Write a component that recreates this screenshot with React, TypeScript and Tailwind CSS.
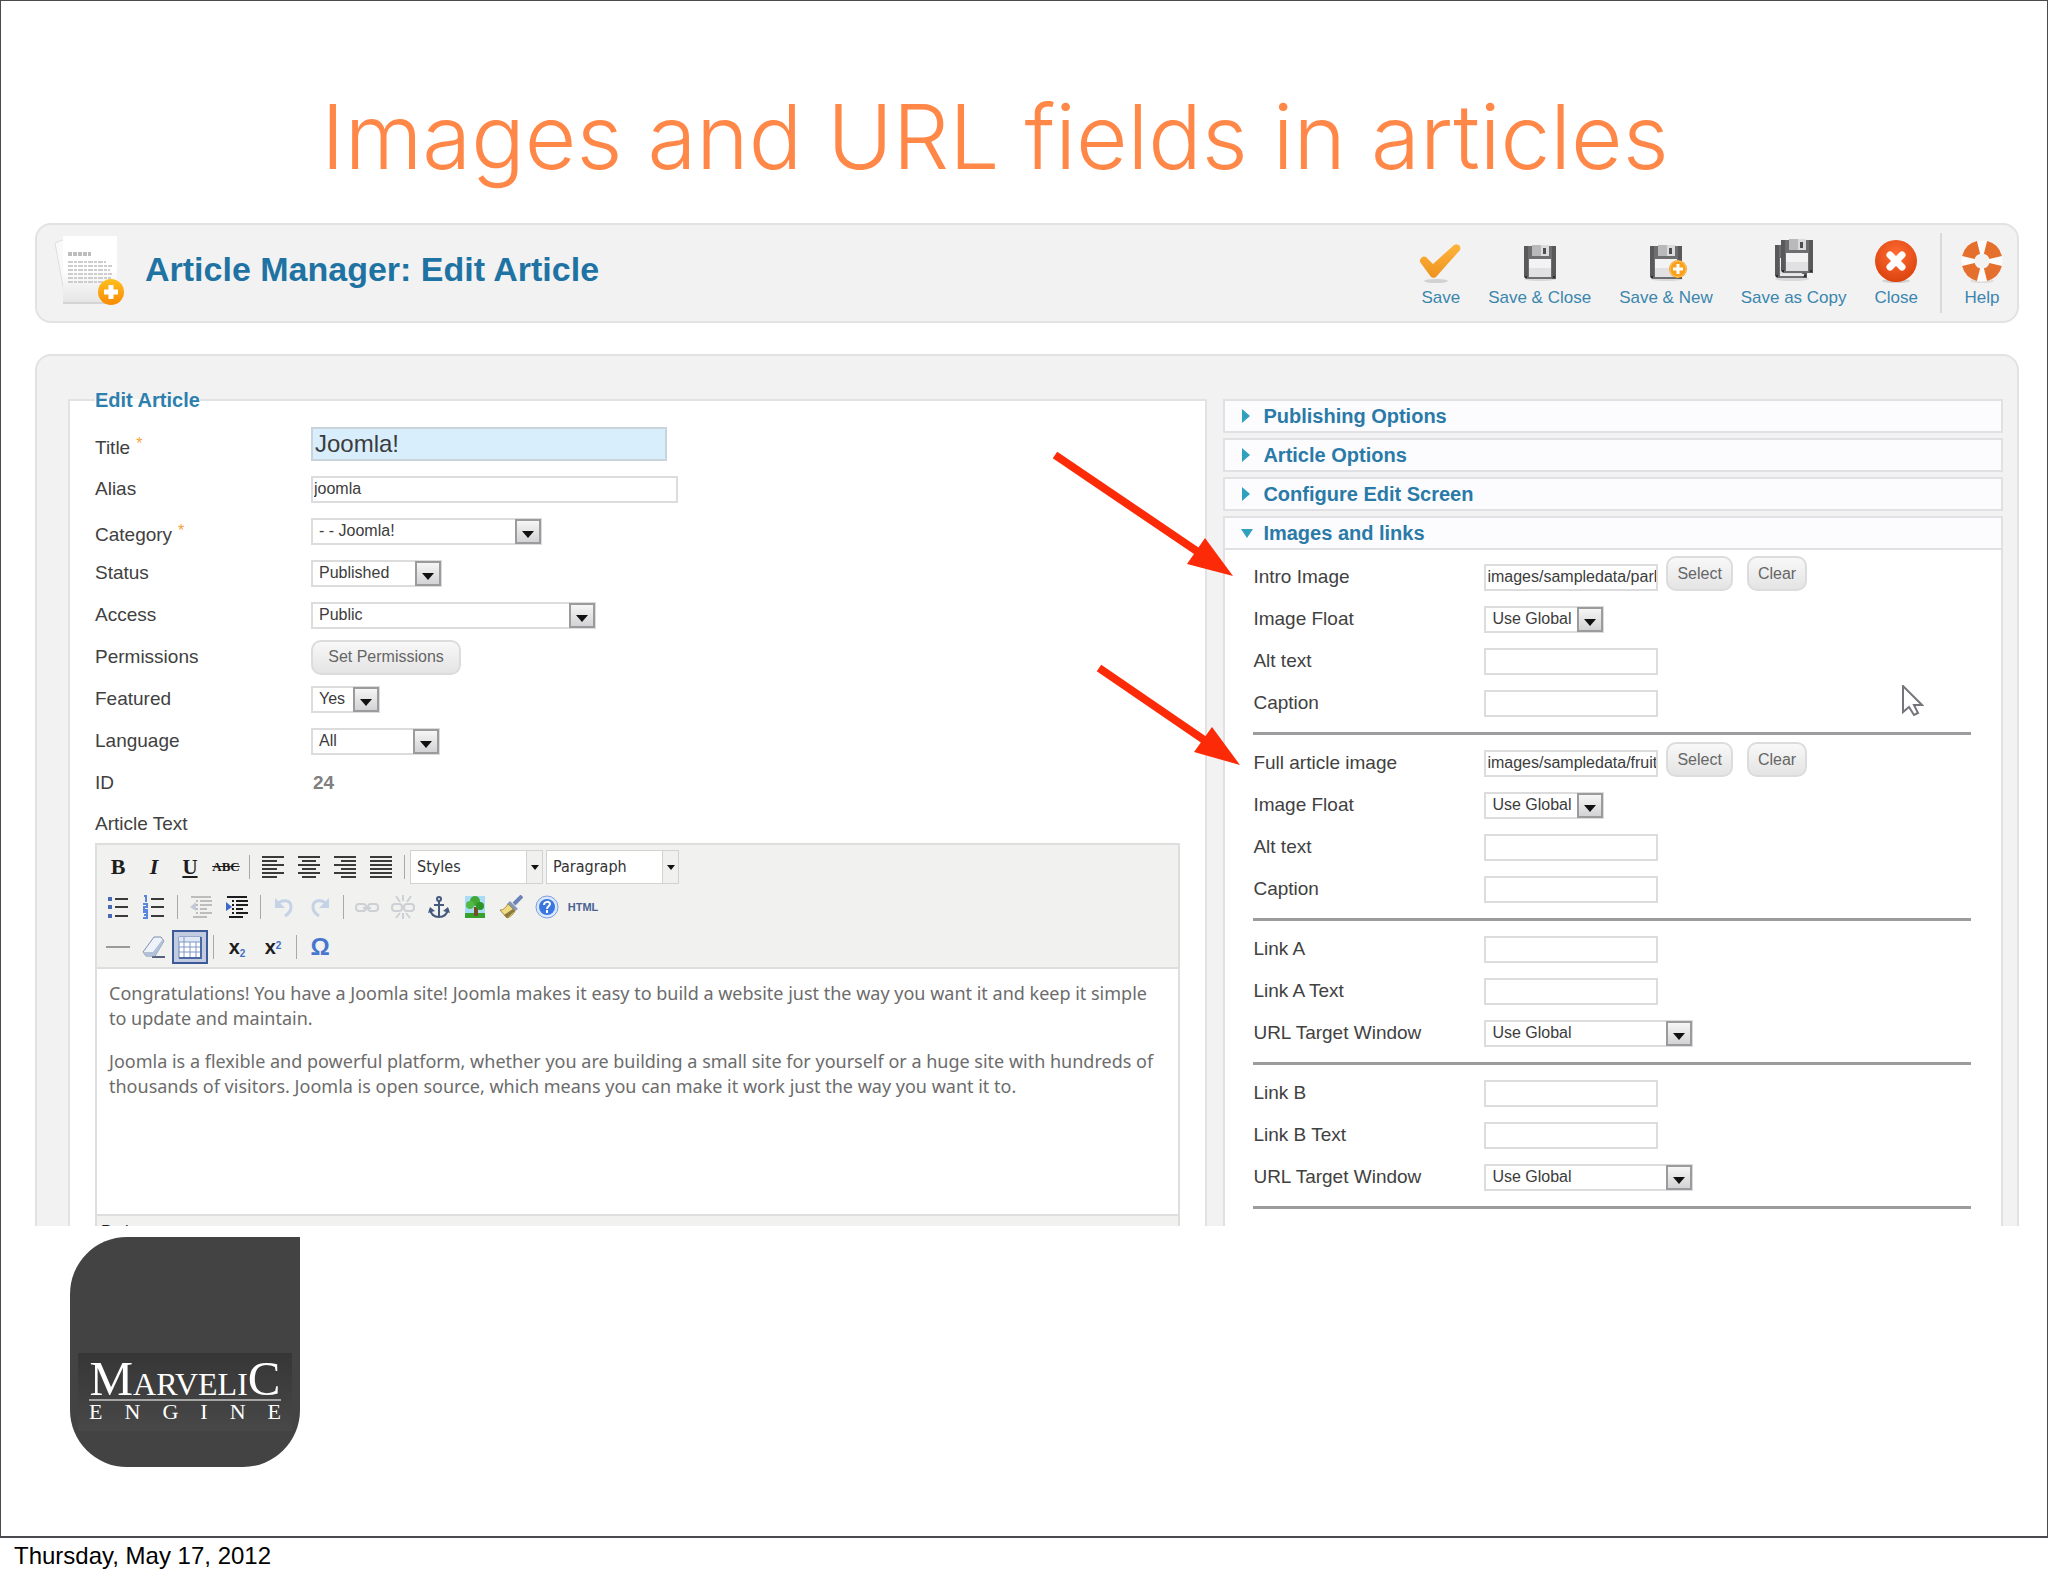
import React, { useId } from "react";

/* ---------- toolbar icons ---------- */

const CheckIcon = () => (
  <svg viewBox="0 0 44 46" className="h-[46px] w-11" aria-hidden="true">
    <defs>
      <linearGradient id="chk" x1="0" y1="0" x2="0" y2="1">
        <stop offset="0" stopColor="#fdb53c" />
        <stop offset="1" stopColor="#ef9220" />
      </linearGradient>
    </defs>
    <ellipse cx="17" cy="43" rx="12" ry="2" fill="#d2d0d0" />
    <path d="M1 24c-1-3 3-7 6-5l7 7L35 7c3-2 8 1 6 5L17 39c-1 1-4 1-5 0z" fill="url(#chk)" />
  </svg>
);

const Floppy = ({ x = 0, y = 0 }: { x?: number; y?: number }) => (
  <g transform={`translate(${x} ${y})`}>
    <path d="M0 1h32v33H2l-2-2z" fill="#6e6e70" />
    <path d="M0 1h4v31H0zM28 1h4v33h-4z" fill="#59595b" />
    <path d="M8 0h17v11H8z" fill="#dcdcde" />
    <path d="M8 0h9v11H8z" fill="#b9b9bb" />
    <path d="M19 3h3v6h-3z" fill="#4f4f51" />
    <path d="M5 14h22v18H5z" fill="#f3f3f4" />
    <path d="M5 23h22v9H5z" fill="#e1e1e3" />
    <path d="M1 31h2v2H1zM29 31h2v2h-2z" fill="#2e2e30" />
  </g>
);

const SaveCloseIcon = () => (
  <svg viewBox="0 0 44 46" className="h-[46px] w-11" aria-hidden="true">
    <ellipse cx="22" cy="41" rx="16" ry="2" fill="#dad9da" />
    <Floppy x={6} y={7} />
  </svg>
);

const SaveNewIcon = () => (
  <svg viewBox="0 0 44 46" className="h-[46px] w-11" aria-hidden="true">
    <ellipse cx="23" cy="41" rx="16" ry="2" fill="#dad9da" />
    <Floppy x={6} y={7} />
    <circle cx="34" cy="31" r="9" fill="#f9a11d" />
    <circle cx="34" cy="31" r="8" fill="none" stroke="#fcc15f" />
    <path d="M34 26v10M29 31h10" stroke="#fff" strokeWidth="3" />
  </svg>
);

const SaveCopyIcon = () => (
  <svg viewBox="0 0 44 46" className="h-[46px] w-11" aria-hidden="true">
    <ellipse cx="20" cy="41" rx="17" ry="2" fill="#dad9da" />
    <Floppy x={3} y={6} />
    <path d="M8 36h24v2H8z" fill="#e8e8e8" />
    <Floppy x={9} y={1} />
  </svg>
);

const CloseIcon = () => (
  <svg viewBox="0 0 44 46" className="h-[46px] w-11" aria-hidden="true">
    <defs>
      <radialGradient id="cls" cx="0.5" cy="0.35" r="0.7">
        <stop offset="0" stopColor="#ff6d33" />
        <stop offset="1" stopColor="#d93f0b" />
      </radialGradient>
    </defs>
    <ellipse cx="22" cy="43" rx="14" ry="2" fill="#d2d0d0" />
    <circle cx="22" cy="23" r="21" fill="url(#cls)" />
    <path d="M16 17l12 12M28 17L16 29" stroke="#fff" strokeWidth="7" strokeLinecap="round" />
  </svg>
);

const HelpIcon = () => (
  <svg viewBox="0 0 44 46" className="h-[46px] w-11" aria-hidden="true">
    <ellipse cx="22" cy="43" rx="12" ry="2" fill="#dddcdd" />
    <circle cx="22" cy="23" r="14" fill="none" stroke="#fbfbfb" strokeWidth="13" />
    <g fill="none" stroke="#e56f2c" strokeWidth="13">
      <path d="M25.5 9.4A14 14 0 0 1 35.6 19.5" />
      <path d="M35.6 26.5A14 14 0 0 1 25.5 36.6" />
      <path d="M18.5 36.6A14 14 0 0 1 8.4 26.5" />
      <path d="M8.4 19.5A14 14 0 0 1 18.5 9.4" />
    </g>
  </svg>
);

const ArticleIcon = () => (
  <svg viewBox="0 0 70 72" className="h-[72px] w-[70px]" aria-hidden="true">
    <defs>
      <linearGradient id="sheet" x1="0" y1="0" x2="0" y2="1">
        <stop offset="0.5" stopColor="#ffffff" />
        <stop offset="1" stopColor="#e6e6e6" />
      </linearGradient>
      <linearGradient id="plus" x1="0" y1="0" x2="0" y2="1">
        <stop offset="0" stopColor="#ffbf1e" />
        <stop offset="1" stopColor="#f98a05" />
      </linearGradient>
    </defs>
    <path d="M0 8l10-4v58z" fill="#f9f9f9" stroke="#dedede" />
    <path d="M8 66h48v3H8z" fill="#d4d4d4" />
    <path d="M8 1h54v66H8z" fill="url(#sheet)" />
    <path d="M13 19h23" stroke="#bdbdbd" strokeWidth="4" strokeDasharray="4 1" />
    <g stroke="#cdcdcd" strokeWidth="2" strokeDasharray="5 1 3 1">
      <path d="M13 27h38M13 31h44M13 35h42M13 39h44M13 43h43M13 47h36" />
    </g>
    <circle cx="56" cy="57" r="13" fill="url(#plus)" />
    <path d="M56 50v14M49 57h14" stroke="#fff" strokeWidth="5" />
  </svg>
);

/* ---------- editor icons ---------- */

const Ico = ({ children }: { children: React.ReactNode }) => (
  <svg viewBox="0 0 24 24" className="h-6 w-6" aria-hidden="true">
    {children}
  </svg>
);

const AlignIcon = ({ d }: { d: string }) => (
  <Ico>
    <path d={d} stroke="#3a3a3a" strokeWidth="2" />
  </Ico>
);

const BulletsIcon = () => (
  <Ico>
    <path d="M9 4h13M9 12h13M9 21h13" stroke="#3a3a3a" strokeWidth="2" />
    <path d="M2 2h4v4H2zM2 10h4v4H2zM2 19h4v4H2z" fill="#4a68b8" />
  </Ico>
);

const NumbersIcon = () => (
  <Ico>
    <path d="M9 4h13M9 12h13M9 21h13" stroke="#3a3a3a" strokeWidth="2" />
    <path d="M2 1h2v6M1 9h4v3H2v3h4M1 17h4v6H1M2 20h3" fill="none" stroke="#5a86dd" strokeWidth="2" />
  </Ico>
);

const IndentIcon = ({ faded }: { faded?: boolean }) => (
  <Ico>
    <g stroke={faded ? "#bdbdbd" : "#1c1c1c"} strokeWidth="2">
      <path d="M2 2h20M11 6h12M11 10h12M11 14h7M11 18h12M4 22h14" />
      <path d="M8 1v22" strokeDasharray="2 2" />
    </g>
    <path d={faded ? "M7 7v9l-6-4z" : "M1 7v9l6-4z"} fill={faded ? "#c3c9d8" : "#3f68c8"} />
  </Ico>
);

const UndoIcon = ({ flip }: { flip?: boolean }) => (
  <Ico>
    <g transform={flip ? "matrix(-1 0 0 1 24 0)" : undefined} fill="none" stroke="#c6d2e6" strokeWidth="3">
      <path d="M5 10c4-6 14-6 14 2 0 5-3 7-6 9" />
      <path d="M3 3v10h10z" fill="#c6d2e6" stroke="none" />
    </g>
  </Ico>
);

const LinkIcon = ({ broken }: { broken?: boolean }) => (
  <Ico>
    <g fill="none" stroke="#cdd0d4" strokeWidth="2">
      <rect x="1" y="9" width="10" height="7" rx="3" />
      <rect x="13" y="9" width="10" height="7" rx="3" />
      {broken ? <path d="M5 1l4 6M12 0v6M20 1l-4 6M5 23l4-5M12 24v-6M19 23l-4-5" /> : <path d="M8 13h8" />}
    </g>
  </Ico>
);

const AnchorIcon = () => (
  <Ico>
    <g fill="none" stroke="#45597d" strokeWidth="2">
      <circle cx="12" cy="4" r="2" />
      <path d="M12 6v16M7 10h10" />
      <path d="M3 14c1 6 5 8 9 8s8-2 9-8" />
    </g>
    <path d="M1 18l2-6 5 4zM23 18l-2-6-5 4z" fill="#45597d" />
  </Ico>
);

const TreeIcon = () => (
  <Ico>
    <path d="M2 1h20v20H2z" fill="#a8dcf6" />
    <path d="M2 18h20v5H2z" fill="#36a12c" />
    <path d="M11 12h4v9h-4z" fill="#7a4a22" />
    <circle cx="12" cy="6" r="5" fill="#43a935" />
    <circle cx="7" cy="10" r="4" fill="#54b944" />
    <circle cx="17" cy="11" r="4" fill="#2f9426" />
  </Ico>
);

const BroomIcon = () => (
  <Ico>
    <path d="M23 1l-8 8" stroke="#6a84b8" strokeWidth="4" />
    <path d="M11 6l8 8-3 2-8-7z" fill="#8796b5" />
    <path d="M9 9l7 7c-2 4-5 6-8 7L1 15c4 0 6-3 8-6z" fill="#f0dc85" stroke="#a58d3e" />
    <path d="M8 23l8-7-2-2-9 6z" fill="#8c7a3c" />
  </Ico>
);

const QuestionIcon = () => (
  <Ico>
    <circle cx="12" cy="12" r="11" fill="#dbe7fb" stroke="#7c9fde" strokeWidth="1" />
    <circle cx="12" cy="12" r="8" fill="#3a76e0" />
    <path d="M9 10c0-4 6-4 6-1 0 2-3 2-3 5M12 15v3" fill="none" stroke="#fff" strokeWidth="2" />
  </Ico>
);

const EraserIcon = () => (
  <Ico>
    <path d="M10 22h13" stroke="#55637d" strokeWidth="2" />
    <path d="M12 2h7l3 4-9 15H4l-3-4z" fill="#eef2fa" stroke="#7f8fae" />
    <path d="M1 17l3 4h9l9-15-2-1-9 12z" fill="#b3c0d9" />
  </Ico>
);

const TableIcon = () => (
  <Ico>
    <path d="M1 2h22v21H1z" fill="#fff" stroke="#6d86b8" />
    <path d="M1 2h22v5H1z" fill="#dfe7f5" />
    <path d="M6 2v21M12 7v16M18 7v16M1 7h22M1 12h22M1 17h22" stroke="#7f97c6" strokeWidth="1" />
    <path d="M23 2v21H1" fill="none" stroke="#4c69a6" strokeWidth="2" />
  </Ico>
);

/* ---------- editor toolbar parts ---------- */

const Tool = ({ label, active, children }: { label: string; active?: boolean; children: React.ReactNode }) => (
  <button
    type="button"
    aria-label={label}
    className={
      active
        ? "flex h-[34px] w-9 items-center justify-center border-2 border-[#3c5a97] bg-[#c2cbe0]"
        : "flex h-[34px] w-9 items-center justify-center"
    }
  >
    {children}
  </button>
);

const Sep = () => (
  <span className="flex w-[11px] justify-center">
    <span className="h-6 w-px bg-[#a9a9a9]" />
  </span>
);

const EditorSelect = ({ label }: { label: string }) => (
  <span className="relative block">
    <select
      aria-label={label}
      className="block h-[34px] w-[133px] appearance-none border border-[#d2d2d0] bg-white pl-1.5 font-['DejaVu_Sans_Condensed','DejaVu_Sans',sans-serif] text-base text-[#333]"
    >
      <option>{label}</option>
    </select>
    <span className="pointer-events-none absolute inset-y-px right-px flex w-4 items-center justify-center border-l border-[#d2d2d0] bg-[#f0f0ee]">
      <svg viewBox="0 0 8 5" className="h-[5px] w-2" aria-hidden="true">
        <path d="M0 0h8L4 5z" fill="#111" />
      </svg>
    </span>
  </span>
);

/* ---------- form parts ---------- */

const Select = ({ id, value, width }: { id?: string; value: string; width: string }) => (
  <span className={`relative block ${width}`}>
    <select
      id={id}
      className="block h-[27px] w-full appearance-none border-2 border-[#dcdcdc] bg-white pl-1.5 text-base leading-5 text-[#3c3c3c]"
    >
      <option>{value}</option>
    </select>
    <span className="pointer-events-none absolute inset-y-px right-px flex w-[26px] items-end justify-center border-2 border-[#9b9b9d] bg-gradient-to-b from-[#f6f6f6] to-[#d3d3d5] pb-1">
      <svg viewBox="0 0 12 7" className="h-[7px] w-3" aria-hidden="true">
        <path d="M0 0h12L6 7z" fill="#111" />
      </svg>
    </span>
  </span>
);

const TextInput = ({ id, value, width }: { id?: string; value?: string; width: string }) => (
  <input
    id={id}
    type="text"
    defaultValue={value}
    className={`h-[27px] border-2 border-[#dcdbde] bg-white pl-px text-base leading-5 text-[#3c3c3c] ${width}`}
  />
);

const PillButton = ({ children }: { children: React.ReactNode }) => (
  <button
    type="button"
    className="h-[35px] rounded-[10px] border-2 border-[#dddcdd] bg-gradient-to-b from-[#f8f8f8] to-[#e4e4e4] px-[9px] text-base text-[#666]"
  >
    {children}
  </button>
);

type RowProps = {
  label: string;
  required?: boolean;
  render: (id: string) => React.ReactNode;
};

const LeftRow = ({ label, required, render }: RowProps) => {
  const id = useId();
  return (
    <div className="flex min-h-[42px] items-center">
      <label htmlFor={id} className={required ? "w-[216px] pt-2" : "w-[216px]"}>
        {label}
        {required && <span className="pl-1.5 align-top text-base leading-4 text-[#f7a13a]">*</span>}
      </label>
      {render(id)}
    </div>
  );
};

const RightRow = ({ label, render }: RowProps) => {
  const id = useId();
  return (
    <div className="flex min-h-[42px] items-center">
      <label htmlFor={id} className="w-[231px]">
        {label}
      </label>
      {render(id)}
    </div>
  );
};

const MediaRow = ({ label, value }: { label: string; value: string }) => (
  <RightRow
    label={label}
    render={(id) => (
      <>
        <TextInput id={id} value={value} width="w-[174px]" />
        <span className="ml-2 flex gap-3.5 self-start">
          <PillButton>Select</PillButton>
          <PillButton>Clear</PillButton>
        </span>
      </>
    )}
  />
);

const Divider = () => <hr className="mt-2 mb-[7px] border-0 border-t-[3px] border-[#9c9b9d]" />;

const ImageGroup = ({ label, value }: { label: string; value: string }) => (
  <>
    <MediaRow label={label} value={value} />
    <RightRow label="Image Float" render={(id) => <Select id={id} value="Use Global" width="w-[120px]" />} />
    <RightRow label="Alt text" render={(id) => <TextInput id={id} width="w-[174px]" />} />
    <RightRow label="Caption" render={(id) => <TextInput id={id} width="w-[174px]" />} />
    <Divider />
  </>
);

const LinkGroup = ({ name }: { name: string }) => (
  <>
    <RightRow label={name} render={(id) => <TextInput id={id} width="w-[174px]" />} />
    <RightRow label={`${name} Text`} render={(id) => <TextInput id={id} width="w-[174px]" />} />
    <RightRow label="URL Target Window" render={(id) => <Select id={id} value="Use Global" width="w-[209px]" />} />
    <Divider />
  </>
);

const SectionHeader = ({ title, open }: { title: string; open?: boolean }) => (
  <h3>
    <button
      type="button"
      aria-expanded={!!open}
      className="flex h-[34px] w-full items-center gap-2.5 border-2 border-[#e1e0e3] bg-[#fcfbfe] pl-4 text-xl font-bold text-[#2a7aa8]"
    >
      <svg viewBox="0 0 12 14" className="h-3.5 w-3" aria-hidden="true">
        <path d={open ? "M0 3h12L6 12z" : "M1 0l8 7-8 7z"} fill="#2fa0bd" />
      </svg>
      {title}
    </button>
  </h3>
);

const ActionButton = ({ label, icon }: { label: string; icon: React.ReactNode }) => (
  <button
    type="button"
    className="flex min-w-16 flex-col items-center px-3.5 text-[17px] leading-5 whitespace-nowrap text-[#3a86ad]"
  >
    <span className="-mx-3">{icon}</span>
    <span className="mt-1">{label}</span>
  </button>
);

/* ---------- overlays ---------- */

const RedArrow = ({ className, d, head, box }: { className: string; d: string; head: string; box: string }) => (
  <svg viewBox={box} className={className} aria-hidden="true">
    <path d={d} stroke="#fd2a08" strokeWidth="8" fill="none" />
    <path d={head} fill="#fd2a08" />
  </svg>
);

export default function App() {
  return (
    <div className="bg-white font-['Liberation_Sans',Arial,sans-serif]">
      <main className="relative border border-b-2 border-[#4b4b4f] pb-[69px]">
        <h1 className="pt-[76px] pr-[58px] pb-[26px] text-center font-['Inter',sans-serif] text-[89px] leading-[120px] font-light text-[#ff8748]">
          Images and URL fields in articles
        </h1>

        <div className="pr-7 pl-[34px]">
          <header className="flex min-h-[100px] items-center rounded-[16px] border-2 border-[#e3e2e3] bg-[#f3f2f3]">
            <span className="pb-1 pl-[18px]">
              <ArticleIcon />
            </span>
            <h2 className="pb-2 pl-5 text-[34px] leading-10 font-bold text-[#1f73a3]">
              Article Manager: Edit Article
            </h2>
            <nav className="ml-auto flex items-center pr-[3px]">
              <ActionButton label="Save" icon={<CheckIcon />} />
              <ActionButton label="Save & Close" icon={<SaveCloseIcon />} />
              <ActionButton label="Save & New" icon={<SaveNewIcon />} />
              <ActionButton label="Save as Copy" icon={<SaveCopyIcon />} />
              <ActionButton label="Close" icon={<CloseIcon />} />
              <span className="mr-2 ml-2 h-20 w-0.5 bg-[#d9d8da]" />
              <ActionButton label="Help" icon={<HelpIcon />} />
            </nav>
          </header>

          <section className="mt-[31px] grid grid-cols-[19fr_13fr] gap-4 rounded-t-[16px] border-2 border-b-0 border-[#e3e2e3] bg-[#f3f2f3] pt-8 pr-3.5 pl-[31px] text-[19px] leading-6 text-[#414141]">
            <fieldset className="min-w-0 border-2 border-b-0 border-[#e3e2e3] bg-white px-[25px]">
              <legend className="text-xl leading-6 font-bold text-[#2d80ad]">Edit Article</legend>
              <div className="flex flex-col pt-2">
                <div className="flex min-h-12 items-center">
                  <label htmlFor="title" className="w-[216px] pt-2">
                    Title
                    <span className="pl-1.5 align-top text-base leading-4 text-[#f7a13a]">*</span>
                  </label>
                  <input
                    id="title"
                    type="text"
                    defaultValue="Joomla!"
                    className="h-[34px] w-[356px] border-2 border-[#c9d3da] bg-[#d9eefd] pl-0.5 text-2xl leading-7 text-[#3c3c3c]"
                  />
                </div>
                <LeftRow label="Alias" render={(id) => <TextInput id={id} value="joomla" width="w-[367px]" />} />
                <LeftRow label="Category" required render={(id) => <Select id={id} value="- - Joomla!" width="w-[231px]" />} />
                <LeftRow label="Status" render={(id) => <Select id={id} value="Published" width="w-[131px]" />} />
                <LeftRow label="Access" render={(id) => <Select id={id} value="Public" width="w-[285px]" />} />
                <LeftRow
                  label="Permissions"
                  render={(id) => (
                    <button
                      id={id}
                      type="button"
                      className="h-[35px] w-[150px] rounded-[10px] border-2 border-[#dddcdd] bg-gradient-to-b from-[#f8f8f8] to-[#e4e4e4] text-base text-[#666]"
                    >
                      Set Permissions
                    </button>
                  )}
                />
                <LeftRow label="Featured" render={(id) => <Select id={id} value="Yes" width="w-[69px]" />} />
                <LeftRow label="Language" render={(id) => <Select id={id} value="All" width="w-[129px]" />} />
                <LeftRow
                  label="ID"
                  render={(id) => (
                    <output id={id} className="pl-0.5 font-bold text-[#808080]">
                      24
                    </output>
                  )}
                />
                <p className="flex min-h-[39px] items-center">Article Text</p>
              </div>

              <div className="border-2 border-b-0 border-[#dfdede]">
                <div className="border-b-2 border-[#dfdede] bg-[#f1f1ef] pt-0.5 pl-[3px] font-['Liberation_Serif',serif] text-[#1d1d1d]">
                  <div className="flex h-10 items-center">
                    <Tool label="Bold"><span className="text-[22px] font-bold">B</span></Tool>
                    <Tool label="Italic"><span className="text-[22px] font-bold italic">I</span></Tool>
                    <Tool label="Underline"><span className="text-[21px] font-bold underline">U</span></Tool>
                    <Tool label="Strikethrough"><span className="text-[13px] font-bold line-through">ABC</span></Tool>
                    <Sep />
                    <Tool label="Align left"><AlignIcon d="M1 2h22M1 6h15M1 10h22M1 14h15M1 18h22M1 22h15" /></Tool>
                    <Tool label="Align center"><AlignIcon d="M1 2h22M5 6h14M1 10h22M5 14h14M1 18h22M5 22h14" /></Tool>
                    <Tool label="Align right"><AlignIcon d="M1 2h22M8 6h15M1 10h22M8 14h15M1 18h22M8 22h15" /></Tool>
                    <Tool label="Justify"><AlignIcon d="M1 2h22M1 6h22M1 10h22M1 14h22M1 18h22M1 22h22" /></Tool>
                    <Sep />
                    <span className="flex gap-[3px]">
                      <EditorSelect label="Styles" />
                      <EditorSelect label="Paragraph" />
                    </span>
                  </div>
                  <div className="flex h-10 items-center">
                    <Tool label="Bullet list"><BulletsIcon /></Tool>
                    <Tool label="Numbered list"><NumbersIcon /></Tool>
                    <Sep />
                    <Tool label="Outdent"><IndentIcon faded /></Tool>
                    <Tool label="Indent"><IndentIcon /></Tool>
                    <Sep />
                    <Tool label="Undo"><UndoIcon /></Tool>
                    <Tool label="Redo"><UndoIcon flip /></Tool>
                    <Sep />
                    <Tool label="Link"><LinkIcon /></Tool>
                    <Tool label="Unlink"><LinkIcon broken /></Tool>
                    <Tool label="Anchor"><AnchorIcon /></Tool>
                    <Tool label="Image"><TreeIcon /></Tool>
                    <Tool label="Clean up"><BroomIcon /></Tool>
                    <Tool label="Help"><QuestionIcon /></Tool>
                    <Tool label="HTML source">
                      <span className="font-['Liberation_Sans',sans-serif] text-[11px] font-bold text-[#4a6394]">HTML</span>
                    </Tool>
                  </div>
                  <div className="flex h-10 items-center">
                    <Tool label="Horizontal rule"><span className="h-0.5 w-6 bg-[#9a9a9a]" /></Tool>
                    <Tool label="Remove formatting"><EraserIcon /></Tool>
                    <Tool label="Guidelines" active><TableIcon /></Tool>
                    <Sep />
                    <Tool label="Subscript">
                      <span className="font-['Liberation_Sans',sans-serif] text-xl font-bold">
                        x<sub className="text-[10px] text-[#3f6fc8]">2</sub>
                      </span>
                    </Tool>
                    <Tool label="Superscript">
                      <span className="font-['Liberation_Sans',sans-serif] text-xl font-bold">
                        x<sup className="text-[10px] text-[#3f6fc8]">2</sup>
                      </span>
                    </Tool>
                    <Sep />
                    <Tool label="Special character">
                      <span className="font-['Liberation_Sans',sans-serif] text-2xl font-bold text-[#4676cf]">Ω</span>
                    </Tool>
                  </div>
                </div>
                <div className="flex min-h-[245px] flex-col gap-[18px] pt-3 pr-4 pl-3 font-['Noto_Sans',sans-serif] text-[18px] leading-[25px] text-[#6c6c6c]">
                  <p>
                    Congratulations! You have a Joomla site! Joomla makes it easy to build a website just the way you want it and keep it simple to update and maintain.
                  </p>
                  <p>
                    Joomla is a flexible and powerful platform, whether you are building a small site for yourself or a huge site with hundreds of thousands of visitors. Joomla is open source, which means you can make it work just the way you want it to.
                  </p>
                </div>
                <div className="h-3 overflow-hidden border-t-2 border-[#dfdede] bg-[#f1f1ef] pt-1 pl-1 text-base leading-6 text-[#222]">
                  Path:
                </div>
              </div>
            </fieldset>

            <div className="mt-[11px] flex flex-col gap-[5px]">
              <SectionHeader title="Publishing Options" />
              <SectionHeader title="Article Options" />
              <SectionHeader title="Configure Edit Screen" />
              <div className="flex flex-1 flex-col">
                <SectionHeader title="Images and links" open />
                <div className="flex-1 border-x-2 border-[#e1e0e3] bg-white pt-[6px] pr-[30px] pl-7">
                  <ImageGroup label="Intro Image" value="images/sampledata/parks/banner_cradle.jpg" />
                  <ImageGroup label="Full article image" value="images/sampledata/fruitshop/apple.jpg" />
                  <LinkGroup name="Link A" />
                  <LinkGroup name="Link B" />
                </div>
              </div>
            </div>
          </section>
        </div>

        <div className="mt-[11px] ml-[69px] flex h-[230px] w-[230px] flex-col rounded-[57px] rounded-tr-none bg-[#434343] px-2 pt-[116px] font-['Liberation_Serif',serif] text-white">
          <div className="bg-gradient-to-b from-[#363636] to-[#484848] px-[11px] pt-1.5 pb-2">
            <div className="flex h-10 items-baseline justify-center text-[32px] leading-10 whitespace-nowrap">
              <span className="text-[49px]">M</span>ARVELI<span className="text-[49px]">C</span>
            </div>
            <div className="flex justify-between border-t-2 border-[#a5a5a5] text-[22px] leading-[22px]">
              {"ENGINE".split("").map((c, i) => (
                <span key={i}>{c}</span>
              ))}
            </div>
          </div>
        </div>

        <RedArrow
          className="absolute top-[449px] left-[1049px] h-[130px] w-[190px]"
          box="1050 450 190 130"
          d="M1055 455L1204 556"
          head="M1233 576L1205 538L1187 564z"
        />
        <RedArrow
          className="absolute top-[659px] left-[1089px] h-[110px] w-[155px]"
          box="1090 660 155 110"
          d="M1099 668L1210 744"
          head="M1240 765L1212 727L1194 752z"
        />
        <svg viewBox="0 0 22 32" className="absolute top-[684px] left-[1901px] h-8 w-[22px]" aria-hidden="true">
          <path d="M1 1v26l6-5 5 8 4-2-4-8h8z" fill="#fff" stroke="#77757b" strokeWidth="2" />
        </svg>
      </main>
      <footer className="px-3.5 pt-1 pb-1.5 text-2xl leading-7 text-black">Thursday, May 17, 2012</footer>
    </div>
  );
}
